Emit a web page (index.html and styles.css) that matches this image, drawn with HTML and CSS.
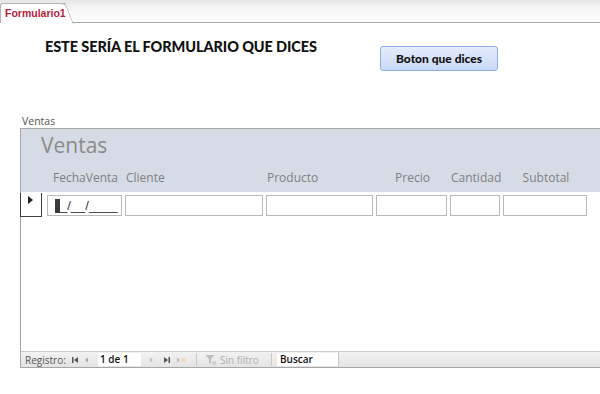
FILE: index.html
```html
<!DOCTYPE html>
<html lang="es">

<head>
    <meta charset="UTF-8">
    <meta name="viewport" content="width=device-width, initial-scale=1.0">
    <title>Formulario1</title>
    <link rel="stylesheet" href="styles.css">
</head>

<body>
    <div class="tab-bar">
        <div class="tab"><span class="tab-text">Formulario1</span></div>
    </div>

    <main class="form-wrap">
        <header class="form-head">
            <h1 class="form-title">ESTE SERÍA EL FORMULARIO QUE DICES</h1>
            <button class="btn">Boton que dices</button>
        </header>

        <div class="sub-label">Ventas</div>

        <section class="subform">
            <div class="sub-head">
                <div class="sub-title">Ventas</div>
                <div class="cols">
                    <span class="col center">FechaVenta</span>
                    <span class="col">Cliente</span>
                    <span class="col">Producto</span>
                    <span class="col center">Precio</span>
                    <span class="col center">Cantidad</span>
                    <span class="col center">Subtotal</span>
                </div>
            </div>

            <div class="row">
                <div class="selector"><span class="arrow"></span></div>
                <div class="cols cells">
                    <div class="cell mask"><span class="caret"></span>_/__/____</div>
                    <div class="cell"></div>
                    <div class="cell"></div>
                    <div class="cell"></div>
                    <div class="cell"></div>
                    <div class="cell"></div>
                </div>
            </div>

            <div class="blank"></div>

            <footer class="nav-bar">
                <span class="nav-label">Registro:</span>
                <span class="nav-btn first">
                    <svg width="9" height="8" viewBox="0 0 9 8"><rect x="1" y="1" width="1.5" height="6" fill="#555"/><path d="M7 1 L3 4 L7 7 Z" fill="#555"/></svg>
                </span>
                <span class="nav-btn prev">
                    <svg width="7" height="8" viewBox="0 0 7 8"><path d="M5 1.5 L2 4 L5 6.5 Z" fill="#aaa"/></svg>
                </span>
                <span class="nav-input">1 de 1</span>
                <span class="nav-btn">
                    <svg width="7" height="8" viewBox="0 0 7 8"><path d="M2 1.5 L5 4 L2 6.5 Z" fill="#bbb"/></svg>
                </span>
                <span class="nav-btn">
                    <svg width="9" height="8" viewBox="0 0 9 8"><path d="M2 1 L6 4 L2 7 Z" fill="#555"/><rect x="6.5" y="1" width="1.5" height="6" fill="#555"/></svg>
                </span>
                <span class="nav-btn">
                    <svg width="11" height="8" viewBox="0 0 11 8"><path d="M1 1.5 L4 4 L1 6.5 Z" fill="#bbb"/><circle cx="7.5" cy="4" r="2.2" fill="#f3dcb0"/></svg>
                </span>
                <span class="nav-sep"></span>
                <span class="nav-filter">
                    <svg width="13" height="12" viewBox="0 0 13 12"><path d="M0.5 1 H9.5 L6 5 V10 L4 8.5 V5 Z" fill="#bdbdbd"/><path d="M7.5 7.5 L11 11 M11 7.5 L7.5 11" stroke="#c8c8c8" stroke-width="1.2"/></svg>
                    Sin filtro
                </span>
                <span class="nav-search">Buscar</span>
                <span class="nav-rest"></span>
            </footer>
        </section>
    </main>
</body>

</html>
```

FILE: styles.css
```css
html,
body {
    margin: 0;
    padding: 0;

    width: 100%;
    height: 100%;
    background: #ffffff;
}

body {
    font-family: Lato, "Open Sans", sans-serif;
    color: #000000;
}

.tab-bar {
    height: 22px;
    background: linear-gradient(#e6e6e6, #f6f6f6 40%, #ffffff);
    border-bottom: 1px solid #a9a9a9;
    display: flex;
    align-items: flex-end;
}

.tab {
    position: relative;
    margin-bottom: -1px;
    height: 19px;
    line-height: 19px;
    padding: 0 0 0 4px;

    background: #ffffff;
    border: 1px solid #b4b4b4;
    border-right: 0;
    border-bottom: 0;
    border-radius: 3px 0 0 0;

    color: #b3233d;
    font-family: "Liberation Sans", Arial, sans-serif;
    font-weight: bold;
    font-size: 10.5px;
}

.tab-text {
    position: relative;
    z-index: 1;
}

.tab::after {
    content: "";
    position: absolute;
    right: -8px;
    top: -1px;
    width: 12px;
    height: 20px;

    background: #ffffff;
    border-top: 1px solid #b4b4b4;
    border-right: 1px solid #b4b4b4;
    border-radius: 0 5px 0 0;
    transform: skewX(22deg);
    transform-origin: bottom left;
}

.form-wrap {
    padding-left: 20px;
}

.form-head {
    display: flex;
    align-items: flex-start;
    height: 92px;
}

.form-title {
    margin: 15px 0 0 25px;
    width: 335px;

    font-size: 14.5px;
    font-weight: 900;
    letter-spacing: -0.1px;
    color: #111111;
}

.btn {
    margin-top: 23px;
    width: 118px;
    height: 25px;

    background: linear-gradient(#e4ecfb, #c9d9f6);
    border: 1px solid #8eaee3;
    border-radius: 3px;

    font-family: Lato, sans-serif;
    font-weight: 900;
    font-size: 12px;
    color: #111111;
}

.sub-label {
    padding-left: 2px;
    height: 13px;
    line-height: 13px;

    font-family: "Open Sans", sans-serif;
    font-size: 10.5px;
    color: #555555;
}

.subform {
    height: 238px;
    border: 1px solid #a6a6a6;
    border-right: 0;
    display: flex;
    flex-direction: column;
}

.sub-head {
    height: 63px;
    background: #d6dce5;
}

.sub-title {
    padding: 2px 0 0 20px;
    height: 34px;

    font-family: "Open Sans", sans-serif;
    font-size: 21px;
    color: #8a8a8a;
}

.cols {
    display: grid;
    grid-template-columns: 75px 138px 107px 71px 50px 84px;
    column-gap: 3px;
    padding-left: 27px;
}

.col {
    padding-top: 4px;
    font-family: "Open Sans", sans-serif;
    font-size: 12px;
    color: #808080;
}

.col.center {
    text-align: center;
}

.row {
    display: flex;
    height: 25px;
    padding-top: 1px;
}

.selector {
    box-sizing: border-box;
    width: 22px;
    height: 24px;
    margin-left: -1px;
    border: 1px solid #404040;
    border-top: 0;
    background: #ffffff;
}

.arrow {
    display: block;
    margin: 3px 0 0 7px;
    width: 0;
    height: 0;
    border-top: 4px solid transparent;
    border-bottom: 4px solid transparent;
    border-left: 5px solid #222222;
}

.cells {
    padding-left: 5px;
    padding-top: 2px;
}

.cell {
    box-sizing: border-box;
    height: 21px;
    border: 1px solid #b9b9b9;
    background: #ffffff;
}

.mask {
    display: flex;
    align-items: center;
    padding-left: 7px;

    font-family: "Liberation Sans", sans-serif;
    font-size: 13px;
    color: #333333;
}

.caret {
    display: inline-block;
    width: 5px;
    height: 14px;
    background: #3a3a3a;
}

.blank {
    flex: 1;
}

.nav-bar {
    height: 15px;
    display: flex;
    align-items: center;
    border-top: 1px solid #c8c8c8;
    background: linear-gradient(#f2f2f2, #e4e4e4);

    font-family: "Open Sans", sans-serif;
    font-size: 10px;
    color: #555555;
}

.nav-label {
    box-sizing: border-box;
    width: 48px;
    padding-left: 4px;
}

.nav-btn {
    display: flex;
    align-items: center;
    justify-content: center;
    width: 15px;
    height: 15px;
}

.nav-btn.first {
    width: 12px;
}

.nav-btn.prev {
    width: 10px;
}

.nav-input {
    width: 41px;
    height: 13px;
    line-height: 13px;
    margin-left: 7px;
    margin-right: 3px;
    padding-left: 2px;
    background: #ffffff;
    color: #111111;
    font-weight: 600;
}

.nav-sep {
    width: 1px;
    height: 13px;
    margin-left: 7px;
    background: #c8c8c8;
}

.nav-filter {
    box-sizing: border-box;
    display: flex;
    align-items: center;
    gap: 2px;
    width: 75px;
    height: 13px;
    padding-left: 8px;
    color: #b0b0b0;
    border-right: 1px solid #c8c8c8;
}

.nav-search {
    width: 58px;
    height: 13px;
    line-height: 13px;
    margin-left: 5px;
    padding-left: 3px;
    background: #ffffff;
    color: #111111;
    font-weight: 600;
}

.nav-rest {
    flex: 1;
    height: 15px;
    border-left: 1px solid #c8c8c8;
}
```
